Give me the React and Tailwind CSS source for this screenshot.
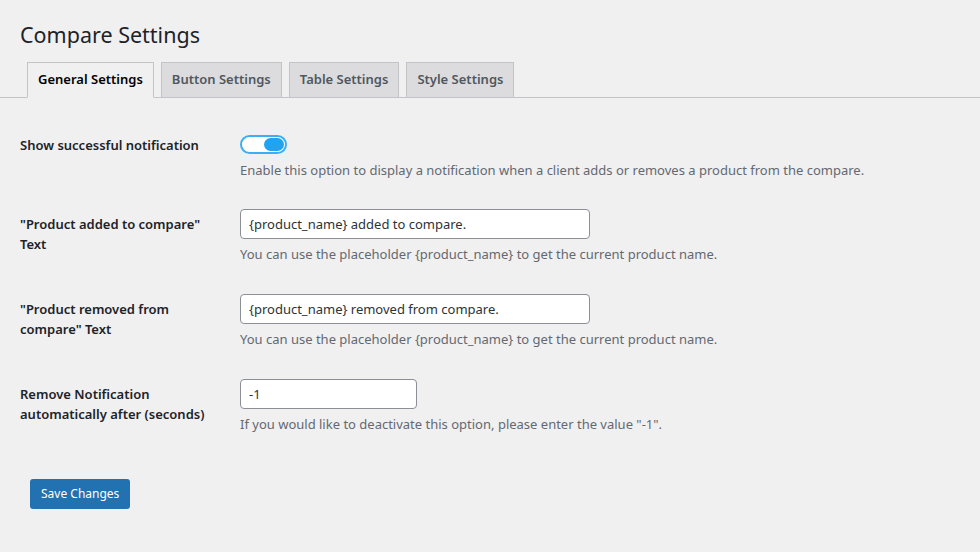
import { useState } from "react";

const font = { fontFamily: '"Noto Sans", "Open Sans", sans-serif' };

function Row({ label, children, className = "", labelPad = "pt-[5px]" }) {
    return (
        <div className={`flex ${className}`}>
            <div className={`w-[240px] shrink-0 pl-5 whitespace-nowrap text-[13px] font-semibold leading-[20px] text-[#1d2327] ${labelPad}`}>
                {label}
            </div>
            <div className="flex-1">{children}</div>
        </div>
    );
}

function Help({ children, className = "mt-[5px]" }) {
    return <p className={`${className} text-[13px] leading-[20px] text-[#646970]`}>{children}</p>;
}

const inputCls =
    "h-[30px] px-2 border border-[#8c8f94] rounded-[4px] bg-white text-[13px] text-[#2c3338] outline-none";

export default function App() {
    const [on, setOn] = useState(true);
    const [added, setAdded] = useState("{product_name} added to compare.");
    const [removed, setRemoved] = useState("{product_name} removed from compare.");
    const [secs, setSecs] = useState("-1");

    const tabs = ["General Settings", "Button Settings", "Table Settings", "Style Settings"];

    return (
        <div className="w-[980px] h-[552px] bg-[#f0f0f1] text-[#3c434a] overflow-hidden" style={font}>
            <h1 className="pl-5 pt-[20px] text-[21.5px] leading-[30px] font-normal text-[#1d2327]">
                Compare Settings
            </h1>

            <div className="mt-[12px] flex items-end gap-[7px] pl-[27px] border-b border-[#c3c4c7]">
                {tabs.map((t, i) => (
                    <div
                        key={t}
                        className={
                            i === 0
                                ? "-mb-px h-[36px] px-[10px] flex items-center border border-[#c3c4c7] border-b-[#f0f0f1] bg-[#f0f0f1] text-[13px] font-semibold text-black"
                                : "-mb-px h-[36px] px-[10px] flex items-center border border-[#c3c4c7] bg-[#dcdcde] text-[13px] font-semibold text-[#50575e]"
                        }
                    >
                        {t}
                    </div>
                ))}
            </div>

            <div className="pt-[37px]">
                <Row label="Show successful notification" labelPad="pt-0">
                    <button
                        onClick={() => setOn(!on)}
                        className="w-[47px] h-[19px] rounded-full border-2 border-[#3ab0f4] bg-white flex items-center px-[1px] justify-end"
                    >
                        <span className="w-[20px] h-[13px] rounded-full bg-[#22a3ef]" />
                    </button>
                    <Help className="mt-[6px]">
                        Enable this option to display a notification when a client adds or removes a product from the compare.
                    </Help>
                </Row>

                <Row
                    label={
                        <>
                            "Product added to compare"
                            <br />
                            Text
                        </>
                    }
                    className="mt-[29px]"
                >
                    <input
                        value={added}
                        onChange={(e) => setAdded(e.target.value)}
                        className={`w-[350px] ${inputCls}`}
                        style={font}
                    />
                    <Help>You can use the placeholder {"{product_name}"} to get the current product name.</Help>
                </Row>

                <Row
                    label={
                        <>
                            "Product removed from
                            <br />
                            compare" Text
                        </>
                    }
                    className="mt-[30px]"
                >
                    <input
                        value={removed}
                        onChange={(e) => setRemoved(e.target.value)}
                        className={`w-[350px] ${inputCls}`}
                        style={font}
                    />
                    <Help>You can use the placeholder {"{product_name}"} to get the current product name.</Help>
                </Row>

                <Row
                    label={
                        <>
                            Remove Notification
                            <br />
                            automatically after (seconds)
                        </>
                    }
                    className="mt-[30px]"
                >
                    <input
                        value={secs}
                        onChange={(e) => setSecs(e.target.value)}
                        className={`w-[177px] ${inputCls}`}
                        style={font}
                    />
                    <Help>If you would like to deactivate this option, please enter the value "-1".</Help>
                </Row>
            </div>

            <div className="pl-[30px] pt-[45px]">
                <button className="h-[30px] px-[11px] rounded-[3px] bg-[#2271b1] text-white text-[12px] leading-[28px]">
                    Save Changes
                </button>
            </div>
        </div>
    );
}
